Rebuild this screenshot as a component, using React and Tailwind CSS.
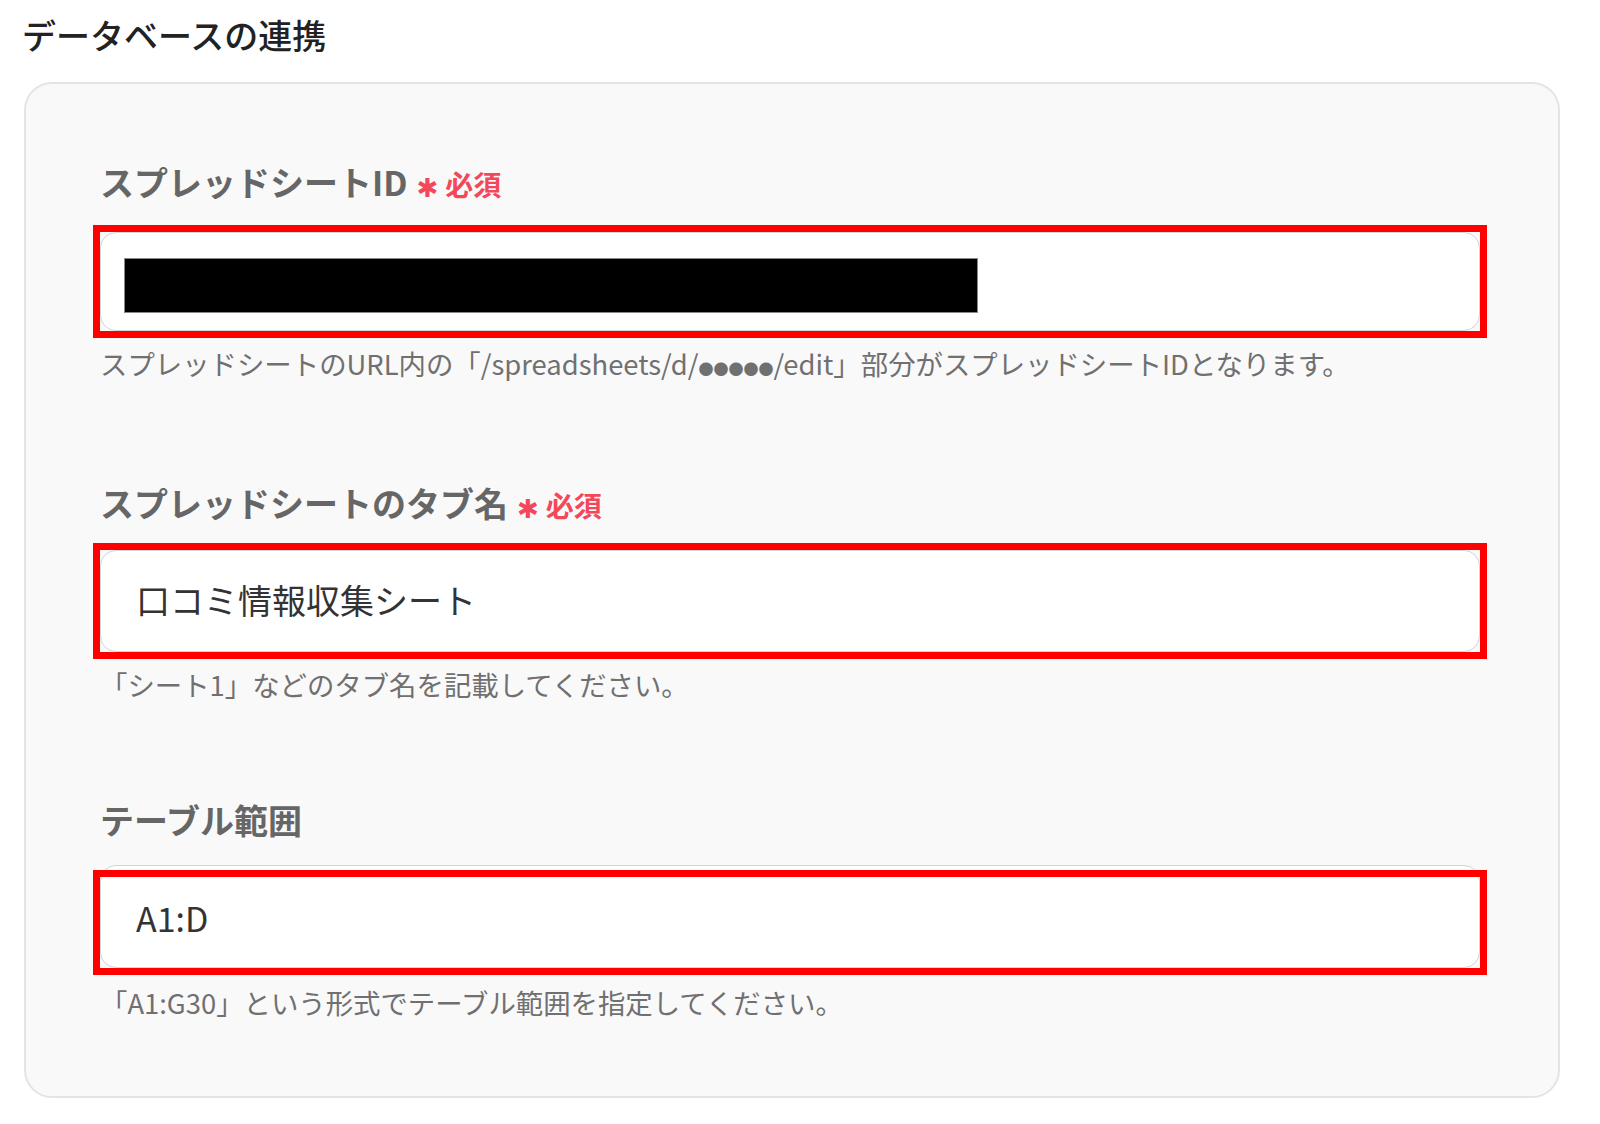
export default function App() {
  const font = "font-['Noto_Sans_CJK_JP','Noto_Sans',sans-serif]";
  return (
    <div className={`w-[1600px] h-[1124px] bg-white overflow-hidden ${font}`}>
      <h1 className="pt-[15px] pl-[22px] text-[34px] leading-[40px] font-medium text-[#222222]">
        データベースの連携
      </h1>
      <div className="mt-[27px] ml-[24px] w-[1536px] h-[1016px] rounded-[28px] border-2 border-[#e1e4e8] bg-[#f9f9fa] pl-[74px] pt-[78px]">
        {/* Field 1 */}
        <div className="flex items-center h-[40px] leading-[40px]">
          <span className="text-[34px] font-bold text-[#666666]">スプレッドシートID</span>
          <span className="ml-[9px] mt-[12px] text-[26px] leading-none text-[#f2485a] font-['DejaVu_Sans',sans-serif]">✱</span>
          <span className="ml-[7px] mt-[4px] text-[28px] font-bold text-[#f2485a]">必須</span>
        </div>
        <div className="relative mt-[30px] w-[1380px] h-[99px] rounded-[16px] border border-[#d4d4d4] bg-white pl-[23px] pt-[25px]">
          <div className="w-[854px] h-[55px] bg-black border border-[#8a8a8a]"></div>
          <div className="absolute -top-[8px] -bottom-[8px] -left-[8px] -right-[8px] border-[7px] border-[#ff0000]"></div>
        </div>
        <p className="mt-[14px] text-[27.4px] leading-[36px] text-[#707070] whitespace-nowrap">
          スプレッドシートのURL内の「/spreadsheets/d/<span className="text-[15px]">●●●●●</span>/edit」部分がスプレッドシートIDとなります。
        </p>

        {/* Field 2 */}
        <div className="mt-[96px] flex items-center h-[40px] leading-[40px]">
          <span className="text-[34px] font-bold text-[#666666]">スプレッドシートのタブ名</span>
          <span className="ml-[9px] mt-[12px] text-[26px] leading-none text-[#f2485a] font-['DejaVu_Sans',sans-serif]">✱</span>
          <span className="ml-[7px] mt-[4px] text-[28px] font-bold text-[#f2485a]">必須</span>
        </div>
        <div className="relative mt-[27px] w-[1380px] h-[102px] rounded-[16px] border border-[#d4d4d4] bg-white pl-[35px] flex items-center">
          <span className="text-[34px] text-[#333333] -mt-[4px]">口コミ情報収集シート</span>
          <div className="absolute -top-[8px] -bottom-[8px] -left-[8px] -right-[8px] border-[7px] border-[#ff0000]"></div>
        </div>
        <p className="mt-[14px] text-[27.4px] leading-[36px] text-[#707070] whitespace-nowrap">
          「シート1」などのタブ名を記載してください。
        </p>

        {/* Field 3 */}
        <div className="mt-[98px] flex items-center h-[40px] leading-[40px]">
          <span className="text-[34px] font-bold text-[#666666]">テーブル範囲</span>
        </div>
        <div className="relative mt-[25px] w-[1380px] h-[103px] rounded-[16px] border border-[#d4d4d4] bg-white pl-[35px] flex items-center">
          <span className="text-[34px] text-[#333333] mt-[2px]">A1:D</span>
          <div className="absolute top-[4px] -bottom-[8px] -left-[8px] -right-[8px] border-[7px] border-[#ff0000]"></div>
        </div>
        <p className="mt-[16px] text-[27.4px] leading-[36px] text-[#707070] whitespace-nowrap">
          「A1:G30」という形式でテーブル範囲を指定してください。
        </p>
      </div>
    </div>
  );
}
